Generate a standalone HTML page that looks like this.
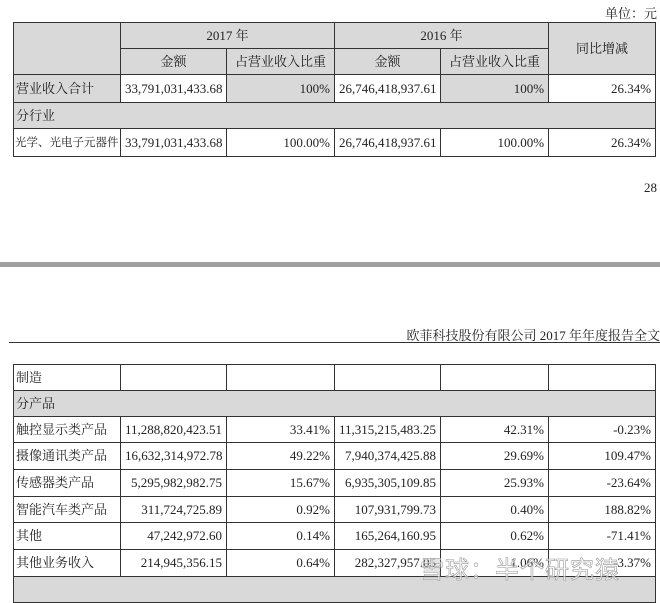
<!DOCTYPE html>
<html><head><meta charset="utf-8"><style>
body{margin:0;width:660px;height:584px;background:#fff;overflow:hidden;position:relative;font-family:"Liberation Serif","Noto Serif CJK SC",serif;font-size:13px;color:#222}
table{position:absolute;left:13px;border-collapse:collapse;table-layout:fixed}
td{border:1px solid #333;padding:0 4px;height:25px;line-height:14px;white-space:nowrap;text-align:right;overflow:hidden}
td.l{text-align:left;padding-left:2px}
td.c{text-align:center}
.g{background:#d9d9d9}
.a{position:absolute}
</style></head><body>
<div class="a" style="right:3px;top:3px">单位：元</div>
<table style="top:22px;width:642px">
<colgroup><col style="width:107px"><col style="width:106px"><col style="width:108px"><col style="width:106px"><col style="width:108px"><col style="width:107px"></colgroup>
<tr><td class="g" rowspan="2"></td><td class="g c" colspan="2">2017 年</td><td class="g c" colspan="2">2016 年</td><td class="g c" rowspan="2">同比增减</td></tr>
<tr><td class="g c">金额</td><td class="g c">占营业收入比重</td><td class="g c">金额</td><td class="g c">占营业收入比重</td></tr>
<tr style="height:28px"><td class="g l">营业收入合计</td><td>33,791,031,433.68</td><td class="g">100%</td><td>26,746,418,937.61</td><td class="g">100%</td><td>26.34%</td></tr>
<tr><td class="g l" colspan="6">分行业</td></tr>
<tr style="height:28px"><td class="l" style="font-size:11.5px;padding-left:1px">光学、光电子元器件</td><td>33,791,031,433.68</td><td>100.00%</td><td>26,746,418,937.61</td><td>100.00%</td><td>26.34%</td></tr>
</table>
<div class="a" style="right:3px;top:180px">28</div>
<div class="a" style="left:0;top:262px;width:660px;height:5px;background:#a0a0a0"></div>
<div class="a" style="right:0;top:325px">欧菲科技股份有限公司 2017 年年度报告全文</div>
<div class="a" style="left:9px;top:342px;width:651px;height:1px;background:#333"></div>
<table style="top:364px;width:642px">
<colgroup><col style="width:107px"><col style="width:106px"><col style="width:108px"><col style="width:106px"><col style="width:108px"><col style="width:107px"></colgroup>
<tr><td class="l">制造</td><td></td><td></td><td></td><td></td><td></td></tr>
<tr><td class="g l" colspan="6">分产品</td></tr>
<tr><td class="l">触控显示类产品</td><td>11,288,820,423.51</td><td>33.41%</td><td>11,315,215,483.25</td><td>42.31%</td><td>-0.23%</td></tr>
<tr style="height:27px"><td class="l">摄像通讯类产品</td><td>16,632,314,972.78</td><td>49.22%</td><td>7,940,374,425.88</td><td>29.69%</td><td>109.47%</td></tr>
<tr style="height:27px"><td class="l">传感器类产品</td><td>5,295,982,982.75</td><td>15.67%</td><td>6,935,305,109.85</td><td>25.93%</td><td>-23.64%</td></tr>
<tr><td class="l">智能汽车类产品</td><td>311,724,725.89</td><td>0.92%</td><td>107,931,799.73</td><td>0.40%</td><td>188.82%</td></tr>
<tr style="height:27px"><td class="l">其他</td><td>47,242,972.60</td><td>0.14%</td><td>165,264,160.95</td><td>0.62%</td><td>-71.41%</td></tr>
<tr style="height:27px"><td class="l">其他业务收入</td><td>214,945,356.15</td><td>0.64%</td><td>282,327,957.05</td><td>1.06%</td><td>-3.37%</td></tr>
<tr><td class="g" colspan="6"></td></tr>
</table>
<div class="a" style="left:420px;top:550px;font-family:'Noto Sans CJK SC',sans-serif;font-size:24px;color:rgba(255,255,255,0.6);-webkit-text-stroke:0.6px #999;letter-spacing:1px">雪球：半个研究猿</div>
</body></html>
